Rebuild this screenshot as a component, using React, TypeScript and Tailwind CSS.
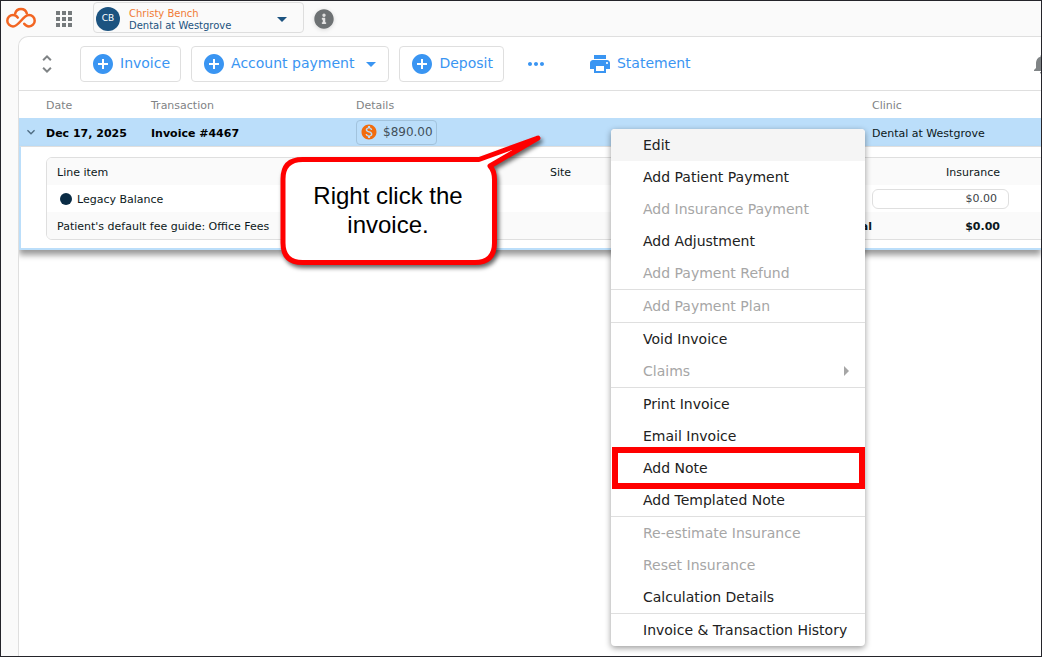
import type { ReactNode } from "react";
import { FaInfoCircle } from "react-icons/fa";
import {
  MdAddCircle,
  MdApps,
  MdArrowDropDown,
  MdArrowRight,
  MdExpandMore,
  MdMonetizationOn,
  MdMoreHoriz,
  MdNotifications,
  MdPrint,
  MdUnfoldMore,
} from "react-icons/md";

type MenuEntry = {
  label: string;
  disabled?: boolean;
  active?: boolean;
  submenu?: boolean;
  highlighted?: boolean;
};

const menuGroups: MenuEntry[][] = [
  [
    { label: "Edit", active: true },
    { label: "Add Patient Payment" },
    { label: "Add Insurance Payment", disabled: true },
    { label: "Add Adjustment" },
    { label: "Add Payment Refund", disabled: true },
  ],
  [{ label: "Add Payment Plan", disabled: true }],
  [{ label: "Void Invoice" }, { label: "Claims", disabled: true, submenu: true }],
  [
    { label: "Print Invoice" },
    { label: "Email Invoice" },
    { label: "Add Note", highlighted: true },
    { label: "Add Templated Note" },
  ],
  [
    { label: "Re-estimate Insurance", disabled: true },
    { label: "Reset Insurance", disabled: true },
    { label: "Calculation Details" },
  ],
  [{ label: "Invoice & Transaction History" }],
];

function Logo() {
  return (
    <svg width="30" height="23" viewBox="0 0 30 23" fill="none" stroke="#f26522" strokeWidth="2.5" strokeLinecap="round" aria-hidden="true">
      <path d="M11.8 12.6 C10.6 10.9 9 10 7 10 A5.7 5.7 0 0 0 7 21.4 C13.2 21.4 16.8 10 23 10 A5.7 5.7 0 0 1 23 21.4 C21 21.4 19.4 20.5 18.2 18.8" />
      <path d="M9.2 8.4 A6 6 0 0 1 20.8 8.4" />
    </svg>
  );
}

function TopBar() {
  return (
    <header className="flex h-9 items-center">
      <a href="#home" aria-label="Home" className="mt-1 ml-[5px] block self-start">
        <Logo />
      </a>
      <button type="button" aria-label="Apps" className="ml-4 text-[#757a7c]">
        <MdApps size={24} />
      </button>
      <button
        type="button"
        className="mt-px ml-[17px] flex h-[31px] w-[211px] items-center self-start rounded border border-[#dedede] bg-[#fafafa] pt-[3px] pr-[9px] pl-[2px] text-left"
      >
        <span className="flex size-6 shrink-0 items-center justify-center rounded-full bg-[#1c5380] text-[9px] text-white">CB</span>
        <span className="ml-[9px] grow pt-0.5 text-[10px] leading-3 text-[#1c5380]">
          <span className="block text-[#f07a35]">Christy Bench</span>
          <span className="block">Dental at Westgrove</span>
        </span>
        <MdArrowDropDown size={24} className="text-[#1c5380]" />
      </button>
      <button type="button" aria-label="Information" className="ml-[10px] rounded-full text-[#6d7173] drop-shadow-sm">
        <FaInfoCircle size={20} />
      </button>
    </header>
  );
}

function ToolButton({ children, outlined = true }: { children: ReactNode; outlined?: boolean }) {
  return (
    <button
      type="button"
      className={
        outlined
          ? "flex h-9 items-center gap-[5px] rounded border border-[#dfdfdf] px-[10px] text-[14px]"
          : "flex h-9 items-center gap-[5px] text-[14px]"
      }
    >
      {children}
    </button>
  );
}

function Toolbar() {
  return (
    <div className="flex h-[54px] items-center overflow-hidden border-b border-[#dfdfdf] text-[#3a95f2]">
      <button type="button" aria-label="Expand all" className="ml-4 text-[#808486]">
        <MdUnfoldMore size={24} />
      </button>
      <div className="ml-[21px] flex gap-[10px]">
        <ToolButton>
          <MdAddCircle size={24} />
          Invoice
        </ToolButton>
        <ToolButton>
          <MdAddCircle size={24} />
          Account payment
          <MdArrowDropDown size={24} className="-mr-[5px]" />
        </ToolButton>
        <ToolButton>
          <MdAddCircle size={24} />
          Deposit
        </ToolButton>
      </div>
      <button type="button" aria-label="More actions" className="ml-5">
        <MdMoreHoriz size={24} />
      </button>
      <div className="ml-10">
        <ToolButton outlined={false}>
          <MdPrint size={24} />
          Statement
        </ToolButton>
      </div>
      <button type="button" aria-label="Notifications" className="-mr-[13px] ml-auto text-[#808486]">
        <MdNotifications size={24} />
      </button>
    </div>
  );
}

function LineItems() {
  return (
    <div className="-mr-4 overflow-hidden rounded-md border border-[#dfdfdf]">
      <table className="w-full table-fixed text-left text-[#0c1820]">
        <colgroup>
          <col className="w-[493px]" />
          <col />
          <col className="w-[184px]" />
        </colgroup>
        <thead className="bg-[#fafafa]">
          <tr className="h-[27px]">
            <th className="pt-[3px] pl-[10px] font-normal">Line item</th>
            <th className="pt-[3px] pl-[10px] font-normal">Site</th>
            <th className="pt-[3px] pr-14 text-right font-normal">Insurance</th>
          </tr>
        </thead>
        <tbody>
          <tr className="h-[27px]">
            <td className="pl-[13px]">
              <span className="flex items-center gap-[5px]">
                <span className="size-3 rounded-full bg-[#0a2c45]" />
                <span className="pt-[3px]">Legacy Balance</span>
              </span>
            </td>
            <td />
            <td className="pr-[47px]">
              <input
                aria-label="Insurance amount"
                defaultValue="$0.00"
                className="block h-5 w-full rounded-md border border-[#dfdfdf] bg-white pr-[11px] text-right text-[#3c4347]"
              />
            </td>
          </tr>
        </tbody>
        <tfoot className="bg-[#fafafa]">
          <tr className="h-[27px]">
            <td className="pt-[3px] pl-[10px]">Patient's default fee guide: Office Fees</td>
            <td className="pt-[3px] text-right font-bold">Total</td>
            <td className="pt-[3px] pr-14 text-right font-bold">$0.00</td>
          </tr>
        </tfoot>
      </table>
    </div>
  );
}

function Transactions() {
  return (
    <div>
      <table className="w-full table-fixed border-separate border-spacing-0 text-left text-[11px]">
        <colgroup>
          <col className="w-[27px]" />
          <col className="w-[105px]" />
          <col className="w-[205px]" />
          <col />
          <col className="w-[169px]" />
        </colgroup>
        <thead className="text-[#7f8385]">
          <tr className="h-[27px]">
            <td />
            <th className="pt-[3px] font-normal">Date</th>
            <th className="pt-[3px] font-normal">Transaction</th>
            <th className="pt-[3px] font-normal">Details</th>
            <th className="pt-[3px] font-normal">Clinic</th>
          </tr>
        </thead>
        <tbody>
          <tr className="h-7 bg-[#bbdefa] text-black">
            <td>
              <button type="button" aria-label="Collapse invoice" className="ml-1 block text-[#4e6c82]">
                <MdExpandMore size={16} />
              </button>
            </td>
            <td className="pt-1 font-bold">Dec 17, 2025</td>
            <td className="pt-1 font-bold">Invoice #4467</td>
            <td>
              <span className="flex h-[25px] w-fit items-center gap-[5px] rounded border border-[#a2c3dd] px-[3px] text-[12px] text-[#42505a]">
                <MdMonetizationOn size={18} className="text-[#f26c0d]" />
                $890.00
              </span>
            </td>
            <td className="pt-1 text-[#0c1820]">Dental at Westgrove</td>
          </tr>
          <tr>
            <td colSpan={5} className="border-t border-b-2 border-l-2 border-t-[#dfdfdf] border-b-[#bbdefa] border-l-[#bbdefa] bg-white pt-[10px] pb-2 pl-[25px] shadow-[0_5px_6px_rgba(0,0,0,0.4)]">
              <LineItems />
            </td>
          </tr>
        </tbody>
      </table>
    </div>
  );
}

function ContextMenu() {
  return (
    <div
      role="menu"
      className="absolute top-32 left-[610px] w-[254px] rounded bg-white text-[14px] text-[#212121] shadow-[0_2px_6px_rgba(0,0,0,0.4)]"
    >
      {menuGroups.map((group) => (
        <div key={group[0].label} className="border-b border-[#dfdfdf] last:border-b-0">
          {group.map((item) => (
            <button
              key={item.label}
              type="button"
              role="menuitem"
              disabled={item.disabled}
              className={`relative flex h-8 w-full items-center justify-between pr-[7px] pl-8 text-left whitespace-nowrap ${
                item.disabled ? "text-[#a6a6a6]" : ""
              } ${item.active ? "rounded-t bg-[#f5f5f5]" : ""}`}
            >
              {item.label}
              {item.submenu && <MdArrowRight size={24} />}
              {item.highlighted && <span className="absolute -inset-y-[5px] right-0 left-px border-[6px] border-[#ff0000]" />}
            </button>
          ))}
        </div>
      ))}
    </div>
  );
}

function Callout() {
  return (
    <div className="absolute top-[132px] left-[276px] h-[140px] w-[272px]">
      <svg width="272" height="140" viewBox="0 0 272 140" className="absolute inset-0 drop-shadow-[2px_3px_2px_rgba(0,0,0,0.6)]" aria-hidden="true">
        <path
          d="M25.5 26.5 H202 L261 5 L213 33 Q217.5 38 217.5 46.5 V110 Q217.5 129.5 198 129.5 H25.5 Q6 129.5 6 110 V46 Q6 26.5 25.5 26.5 Z"
          fill="#fff"
          stroke="#ff0000"
          strokeWidth="5"
          strokeLinejoin="round"
        />
      </svg>
      <p className="relative mt-12 ml-[3px] w-[216px] px-7 text-center font-['Liberation_Sans',Arial,sans-serif] text-[24px] leading-[29px] text-black">
        Right click the invoice.
      </p>
    </div>
  );
}

export default function App() {
  return (
    <div className="relative flex min-h-screen flex-col overflow-hidden border border-[#24242a] bg-[#fafafa] font-['DejaVu_Sans',Verdana,sans-serif]">
      <TopBar />
      <main className="-mt-px ml-[17px] grow overflow-hidden rounded-tl-[10px] border-t border-l border-[#dfdfdf] bg-white">
        <Toolbar />
        <Transactions />
      </main>
      <Callout />
      <ContextMenu />
    </div>
  );
}
